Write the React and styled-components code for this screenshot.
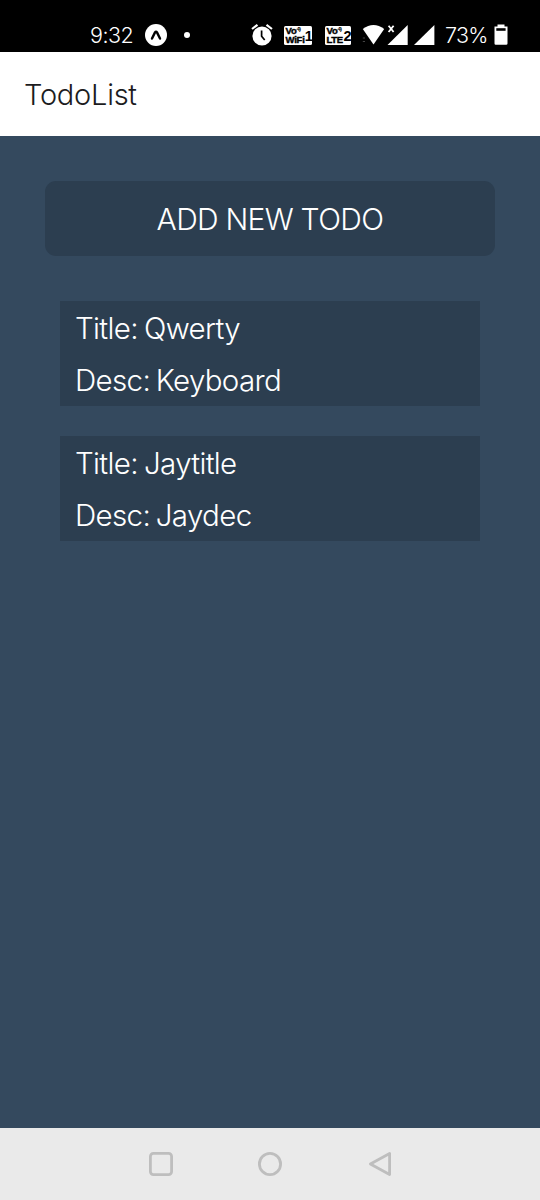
import React from "react";
import styled, { createGlobalStyle } from "styled-components";

const GlobalStyle = createGlobalStyle`
  * { box-sizing: border-box; }
  body { margin: 0; background: #34495e; }
`;

const Screen = styled.div`
  display: flex;
  flex-direction: column;
  width: 540px;
  height: 1200px;
  overflow: hidden;
  background: #34495e;
  font-family: Inter, "Liberation Sans", sans-serif;
  font-weight: 300;
`;

const StatusBar = styled.header`
  display: flex;
  align-items: center;
  flex: none;
  height: 52px;
  padding: 18px 32px 0 90px;
  background: #000;
  color: #fff;
`;

const StatusText = styled.span`
  flex: none;
  width: ${(p) => p.$width}px;
  margin-left: ${(p) => p.$gap || 0}px;
  font-size: 21.5px;
  line-height: 34px;
  letter-spacing: ${(p) => p.$spacing}px;
  white-space: nowrap;
`;

const StatusIcon = styled.svg`
  display: block;
  flex: none;
  margin-left: ${(p) => p.$gap || 0}px;
`;

const NotificationDot = styled.span`
  flex: none;
  width: 6px;
  height: 6px;
  margin-left: 17px;
  border-radius: 50%;
  background: #fff;
`;

const NetworkBadge = styled.div`
  display: flex;
  align-items: center;
  justify-content: space-between;
  flex: none;
  width: ${(p) => p.$width}px;
  height: 19px;
  margin-left: ${(p) => p.$gap}px;
  padding: 0 0 0 1.5px;
  border-radius: 1.5px;
  background: #fff;
  color: #000;
  font-family: "Liberation Sans", Arial, sans-serif;
  font-weight: 700;
`;

const NetworkKind = styled.div`
  display: flex;
  flex-direction: column;
  font-size: 9.5px;
  line-height: 9px;
  letter-spacing: ${(p) => p.$spacing}px;
  white-space: nowrap;
  -webkit-text-stroke: 0.4px #000;
`;

const VoiceLabel = styled.span`
  letter-spacing: -0.2px;
  sup {
    font-size: 6px;
    line-height: 0;
    letter-spacing: -0.8px;
    vertical-align: 3px;
    -webkit-text-stroke: 0;
  }
`;

const SimNumber = styled.span`
  padding-top: 1px;
  font-size: 14.5px;
  line-height: 18px;
  letter-spacing: -0.6px;
`;

const TitleBar = styled.div`
  display: flex;
  align-items: center;
  flex: none;
  height: 84px;
  padding: 2px 24px 0;
  background: #fff;
`;

const Title = styled.h1`
  margin: 0;
  color: #1c1c1e;
  font-size: 29px;
  font-weight: 300;
  line-height: 40px;
  letter-spacing: -0.25px;
`;

const Content = styled.main`
  display: flex;
  flex-direction: column;
  flex: 1;
  padding: 45px;
`;

const AddButton = styled.button`
  height: 75px;
  margin: 0;
  padding: 0;
  border: 0;
  border-radius: 11px;
  background: #2c3e50;
  color: #fff;
  font: inherit;
  font-size: 30px;
  letter-spacing: -0.6px;
  word-spacing: -0.5px;
`;

const TodoList = styled.ul`
  display: flex;
  flex-direction: column;
  gap: 30px;
  margin: 45px 15px 0;
  padding: 0;
  list-style: none;
`;

const TodoCard = styled.li`
  height: 105px;
  padding: 1px 15px 0;
  background: #2c3e50;
  color: #fff;
`;

const TodoLine = styled.div`
  font-size: 29.5px;
  line-height: 52px;
  letter-spacing: -0.65px;
  word-spacing: ${(p) => p.$wordGap}px;
  white-space: nowrap;
`;

const NavigationBar = styled.nav`
  display: flex;
  align-items: center;
  flex: none;
  gap: 84px;
  height: 72px;
  padding-left: 148px;
  background: #eaeaea;
`;

const NavIcon = styled.svg`
  display: block;
  fill: none;
  stroke: #bebebe;
  stroke-width: 2.8px;
  stroke-linejoin: round;
`;

const todos = [
  { title: "Qwerty", desc: "Keyboard" },
  { title: "Jaytitle", desc: "Jaydec" },
];

export default function App() {
  return (
    <Screen>
      <GlobalStyle />
      <StatusBar>
        <StatusText $width={54} $spacing={-0.5}>9:32</StatusText>
        <StatusIcon width="23" height="24" viewBox="0 0 23 24">
          <circle cx="12" cy="12" r="11" fill="#fff" />
          <path d="M8 15.6L11 9.4Q12 7.8 13 9.4L16 15.6" fill="none" stroke="#000" strokeWidth="2.4" strokeLinecap="round" />
        </StatusIcon>
        <NotificationDot />
        <StatusIcon $gap={61} width="22" height="24" viewBox="0 0 22 24">
          <circle cx="11" cy="13" r="9.6" fill="#fff" />
          <path d="M1 6L6.5 1.8M15.5 1.8L21 6" stroke="#fff" strokeWidth="2.2" />
          <path d="M10.6 7.5V13.2L13.7 17" fill="none" stroke="#000" strokeWidth="1.7" />
        </StatusIcon>
        <NetworkBadge $width={28} $gap={11}>
          <NetworkKind $spacing={-0.2}>
            <VoiceLabel>Vo<sup>4)</sup></VoiceLabel>
            <span>WiFi</span>
          </NetworkKind>
          <SimNumber>1</SimNumber>
        </NetworkBadge>
        <NetworkBadge $width={26} $gap={13}>
          <NetworkKind $spacing={-0.3}>
            <VoiceLabel>Vo<sup>4)</sup></VoiceLabel>
            <span>LTE</span>
          </NetworkKind>
          <SimNumber>2</SimNumber>
        </NetworkBadge>
        <StatusIcon $gap={11} width="74" height="24" viewBox="0 0 74 24" fill="#fff">
          <path d="M.8 6Q11.5-1.8 22.2 6L11.5 21.6Z" />
          <path d="M45.7 2V22H25.5Z" />
          <path d="M72.4 2V22H52Z" />
          <path d="M26.6 2.8L31.6 9M31.6 2.8L26.6 9" stroke="#fff" strokeWidth="1.8" />
          <path d="M.8 15H3M.8 18.5H3" stroke="#444" strokeWidth="1" />
        </StatusIcon>
        <StatusText $width={49} $gap={9} $spacing={-0.75}>73%</StatusText>
        <StatusIcon width="14" height="24" viewBox="0 0 14 24">
          <path d="M3.5 1.5H10.5V3.5H13.5V20.5Q13.5 21.8 12.2 21.8H1.7Q.5 21.8 .5 20.5V3.5H3.5Z" fill="#fff" />
          <path d="M2.3 5.2H11.6V7.8H2.3Z" fill="#000" />
        </StatusIcon>
      </StatusBar>
      <TitleBar>
        <Title>TodoList</Title>
      </TitleBar>
      <Content>
        <AddButton>ADD NEW TODO</AddButton>
        <TodoList>
          {todos.map((todo) => (
            <TodoCard key={todo.title}>
              <TodoLine $wordGap={-1.5}>Title: {todo.title}</TodoLine>
              <TodoLine $wordGap={-2}>Desc: {todo.desc}</TodoLine>
            </TodoCard>
          ))}
        </TodoList>
      </Content>
      <NavigationBar>
        <NavIcon width="26" height="26" viewBox="0 0 26 26">
          <rect x="2.4" y="2.4" width="21.2" height="21.2" rx="3" />
        </NavIcon>
        <NavIcon width="26" height="26" viewBox="0 0 26 26">
          <circle cx="12" cy="13" r="10.6" />
        </NavIcon>
        <NavIcon width="26" height="26" viewBox="0 0 26 26">
          <path d="M21.6 2.4V23.6L2.4 13Z" />
        </NavIcon>
      </NavigationBar>
    </Screen>
  );
}
